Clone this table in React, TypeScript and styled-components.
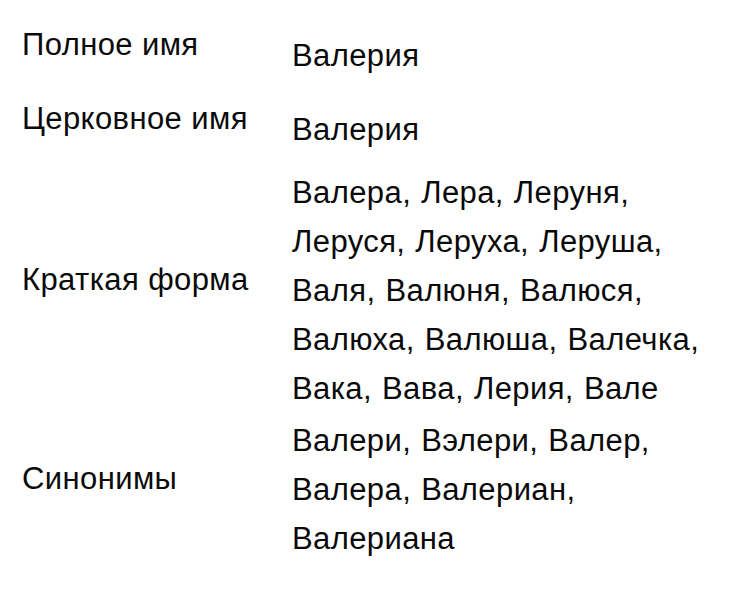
import styled, { createGlobalStyle } from 'styled-components';

const GlobalStyle = createGlobalStyle`
  html, body {
    margin: 0;
    padding: 0;
    background: #ffffff;
  }
  body {
    font-family: "Liberation Sans", Arial, sans-serif;
    color: #0a0a0a;
  }
`;

const Table = styled.div`
  display: flex;
  flex-direction: column;
  gap: 3px;
  padding: 20px 0 0 22px;
  width: 751px;
  box-sizing: border-box;
`;

const Row = styled.div`
  display: grid;
  grid-template-columns: 270px 1fr;
  align-items: center;
`;

const Label = styled.div`
  font-size: 31px;
  line-height: 49px;
  letter-spacing: 0.4px;
  padding-bottom: 22px;
  white-space: nowrap;
`;

const Value = styled.div`
  font-size: 31px;
  line-height: 49px;
  letter-spacing: 0.4px;
  word-spacing: 1px;
`;

const Line = styled.span`
  display: block;
  white-space: nowrap;
`;

const rows = [
  { label: 'Полное имя', lines: ['Валерия'] },
  { label: 'Церковное имя', lines: ['Валерия'] },
  {
    label: 'Краткая форма',
    lines: [
      'Валера, Лера, Леруня,',
      'Леруся, Леруха, Леруша,',
      'Валя, Валюня, Валюся,',
      'Валюха, Валюша, Валечка,',
      'Вака, Вава, Лерия, Вале',
    ],
  },
  { label: 'Синонимы', lines: ['Валери, Вэлери, Валер,', 'Валера, Валериан,', 'Валериана'] },
];

export default function App() {
  return (
    <>
      <GlobalStyle />
      <Table>
        {rows.map(r => (
          <Row key={r.label}>
            <Label>{r.label}</Label>
            <Value>
              {r.lines.map(l => (
                <Line key={l}>{l}</Line>
              ))}
            </Value>
          </Row>
        ))}
      </Table>
    </>
  );
}
